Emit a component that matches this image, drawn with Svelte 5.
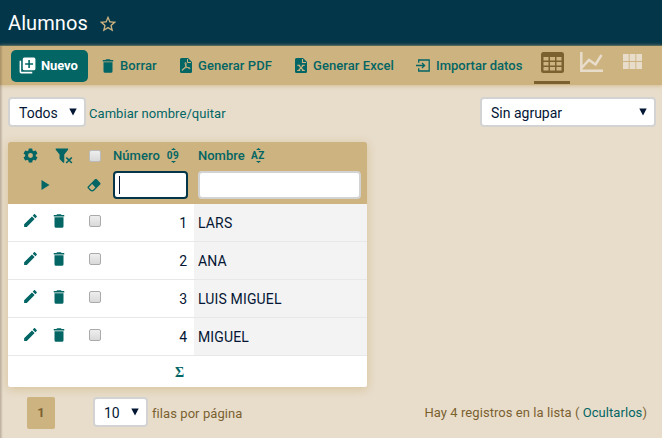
<script>
  const students = [
    { number: 1, name: 'LARS' },
    { number: 2, name: 'ANA' },
    { number: 3, name: 'LUIS MIGUEL' },
    { number: 4, name: 'MIGUEL' }
  ];

  const trash = 'M19,4H15.5L14.5,3H9.5L8.5,4H5V6H19M6,19A2,2 0 0,0 8,21H16A2,2 0 0,0 18,19V7H6V19Z';
  const pencil = 'M20.71,7.04C21.1,6.65 21.1,6 20.71,5.63L18.37,3.29C18,2.9 17.35,2.9 16.96,3.29L15.12,5.12L18.87,8.87M3,17.25V21H6.75L17.81,9.93L14.06,6.18L3,17.25Z';
  const add = 'M19,11H15V15H13V11H9V9H13V5H15V9H19M20,2H8A2,2 0 0,0 6,4V16A2,2 0 0,0 8,18H20A2,2 0 0,0 22,16V4A2,2 0 0,0 20,2M4,6H2V20A2,2 0 0,0 4,22H18V20H4V6Z';
  const star = 'M12,15.39L8.24,17.66L9.23,13.38L5.91,10.5L10.29,10.13L12,6.09L13.71,10.13L18.09,10.5L14.77,13.38L15.76,17.66M22,9.24L14.81,8.63L12,2L9.19,8.63L2,9.24L7.45,13.97L5.82,21L12,17.27L18.18,21L16.54,13.97L22,9.24Z';
  const filter = 'M14.73,20.83L17.58,18L14.73,15.17L16.15,13.76L19,16.57L21.8,13.76L23.22,15.17L20.41,18L23.22,20.83L21.8,22.24L19,19.4L16.15,22.24L14.73,20.83M13,19.88C13.04,20.18 12.94,20.5 12.71,20.71C12.32,21.1 11.69,21.1 11.3,20.71L7.29,16.7C7.06,16.47 6.96,16.16 7,15.87V10.75L2.21,4.62C1.87,4.19 1.95,3.56 2.38,3.22C2.57,3.08 2.78,3 3,3H17C17.22,3 17.43,3.08 17.62,3.22C18.05,3.56 18.13,4.19 17.79,4.62L13,10.75V19.88Z';
  const gear = 'M12,15.5A3.5,3.5 0 0,1 8.5,12A3.5,3.5 0 0,1 12,8.5A3.5,3.5 0 0,1 15.5,12A3.5,3.5 0 0,1 12,15.5M19.43,12.97C19.47,12.65 19.5,12.33 19.5,12C19.5,11.67 19.47,11.34 19.43,11L21.54,9.37C21.73,9.22 21.78,8.95 21.66,8.73L19.66,5.27C19.54,5.05 19.27,4.96 19.05,5.05L16.56,6.05C16.04,5.66 15.5,5.32 14.87,5.07L14.5,2.42C14.46,2.18 14.25,2 14,2H10C9.75,2 9.54,2.18 9.5,2.42L9.13,5.07C8.5,5.32 7.96,5.66 7.44,6.05L4.95,5.05C4.73,4.96 4.46,5.05 4.34,5.27L2.34,8.73C2.21,8.95 2.27,9.22 2.46,9.37L4.57,11C4.53,11.34 4.5,11.67 4.5,12C4.5,12.33 4.53,12.65 4.57,12.97L2.46,14.63C2.27,14.78 2.21,15.05 2.34,15.27L4.34,18.73C4.46,18.95 4.73,19.03 4.95,18.95L7.44,17.94C7.96,18.34 8.5,18.68 9.13,18.93L9.5,21.58C9.54,21.82 9.75,22 10,22H14C14.25,22 14.46,21.82 14.5,21.58L14.87,18.93C15.5,18.67 16.04,18.34 16.56,17.94L19.05,18.95C19.27,19.03 19.54,18.95 19.66,18.73L21.66,15.27C21.78,15.05 21.73,14.78 21.54,14.63L19.43,12.97Z';
</script>

{#snippet icon(path, size)}
  <svg width={size} height={size} viewBox="0 0 24 24" fill="currentColor"><path d={path} /></svg>
{/snippet}

{#snippet sorter(label)}
  <span class="sorter">
    <svg width="5" height="2" viewBox="0 0 5 2"><path d="M0 2 2.5 0 5 2z" /></svg>
    <b>{label}</b>
    <svg width="5" height="2" viewBox="0 0 5 2"><path d="M0 0 2.5 2 5 0z" /></svg>
  </span>
{/snippet}

{#snippet arrow()}
  <svg class="arrow" width="8" height="8" viewBox="0 0 8 8"><path d="M.3 .5h7.400L4 7.500z" /></svg>
{/snippet}

<div class="page">
  <header>
    <h1>Alumnos</h1>
    {@render icon(star, 20)}
  </header>

  <nav>
    <button class="action new">{@render icon(add, 19)}<span>Nuevo</span></button>
    <button class="action delete">{@render icon(trash, 18)}<span>Borrar</span></button>
    <button class="action pdf">
      <svg width="12" height="15" viewBox="0 0 12 15"><path fill="currentColor" d="M1.5 0H8l4 4v9.5A1.5 1.5 0 0 1 10.500 15h-9A1.500 1.500 0 0 1 0 13.500v-12A1.500 1.500 0 0 1 1.500 0z" /><path d="M7.500 1v3.500H11M5.300 4.500c1.200-.5 1 2.500-.1 4.500-1 2-2.400 3.900-3.100 3.300-.7-.8 1.700-2.100 3.800-2.600 2-.5 4.200-.2 4.200.6 0 1-2.500-.2-3.700-1.900C5.100 6.700 4.700 4.800 5.300 4.500z" fill="none" stroke="#cdb380" stroke-width="1" /></svg>
      <span>Generar PDF</span>
    </button>
    <button class="action excel">
      <svg width="12" height="15" viewBox="0 0 12 15"><path fill="currentColor" d="M1.500 0H8l4 4v9.500a1.500 1.500 0 0 1-1.500 1.500h-9A1.500 1.500 0 0 1 0 13.500v-12A1.500 1.500 0 0 1 1.500 0z" /><path d="M7.500 1v3.500H11M2.200 7.200h3M6.800 7.200h3M2.200 12.500h3M6.800 12.500h3M3.500 7.200l5 5.300M8.500 7.200l-5 5.300" fill="none" stroke="#cdb380" stroke-width="1.150" /></svg>
      <span>Generar Excel</span>
    </button>
    <button class="action import">
      <svg width="14" height="13" viewBox="0 0 14 13" fill="none" stroke="currentColor" stroke-width="1.300"><path d="M2.700 3.800V1h10.500v11H2.700V9.200M0 6.500h8.500M6 4l2.600 2.500L6 9" /></svg>
      <span>Importar datos</span>
    </button>
    <div class="views">
      <span class="view current">
        <svg width="23" height="21" viewBox="0 0 23 21"><rect width="23" height="21" rx="2.500" fill="#7b6130" /><path fill="#cdb380" d="M2.500 5h5v3.500h-5zM9 5h5v3.500H9zM15.500 5h5v3.500h-5zM2.500 10h5v3.500h-5zM9 10h5v3.500H9zM15.500 10h5v3.500h-5zM2.500 15h5v3.500h-5zM9 15h5v3.500H9zM15.500 15h5v3.500h-5z" /></svg>
      </span>
      <span class="view chart">
        <svg width="23" height="20" viewBox="0 0 23 20" fill="none" stroke="#e8ddcb" stroke-width="2.500"><path d="M1.300 0v18.700H23M2 15.500 9 8l6.500 4.500L21.500 3" /></svg>
      </span>
      <span class="view cards">
        <svg width="19" height="15" viewBox="0 0 19 15"><path fill="#e8ddcb" d="M0 0h5.700v7H0zM6.600 0h5.800v7H6.600zM13.300 0H19v7h-5.700zM0 8h5.700v7H0zM6.600 8h5.800v7H6.600zM13.300 8H19v7h-5.700z" /></svg>
      </span>
    </div>
  </nav>

  <main>
    <div class="config">
      <div class="select all"><span>Todos</span>{@render arrow()}</div>
      <a class="rename">Cambiar nombre/quitar</a>
      <div class="select group"><span>Sin agrupar</span>{@render arrow()}</div>
    </div>

    <section class="list">
      <div class="head">
        <div class="titles">
          <span class="c-first">{@render icon(gear, 17)}</span>
          <span class="c-second">{@render icon(filter, 19)}</span>
          <span class="c-check"><i class="check"></i></span>
          <span class="c-number"><span class="number-title">Número</span>{@render sorter('09')}</span>
          <span class="c-name"><span class="name-title">Nombre</span>{@render sorter('AZ')}</span>
        </div>
        <div class="filters">
          <span class="play"><svg width="9" height="10" viewBox="0 0 9 10" fill="currentColor"><path d="M.5 0 8.500 5 .5 10z" /></svg></span>
          <span class="clear"><svg width="16" height="16" viewBox="0 0 24 24" fill="currentColor"><path d="M16.240,3.560L21.190,8.500C21.970,9.290 21.970,10.550 21.190,11.340L12,20.530C10.440,22.090 7.910,22.090 6.340,20.530L2.810,17C2.030,16.210 2.030,14.950 2.810,14.160L13.410,3.560C14.200,2.780 15.460,2.780 16.240,3.560M4.220,15.580L7.760,19.110C8.540,19.900 9.800,19.900 10.590,19.110L14.120,15.580L9.170,10.630L4.220,15.580Z" /></svg></span>
          <span class="field focused"><i class="caret"></i></span>
          <span class="field"></span>
        </div>
      </div>
      {#each students as student}
        <div class="row">
          <span class="c-first">{@render icon(pencil, 17)}</span>
          <span class="c-second trash">{@render icon(trash, 18)}</span>
          <span class="c-check"><i class="check"></i></span>
          <span class="number">{student.number}</span>
          <span class="name"><span class="label">{student.name}</span></span>
        </div>
      {/each}
      <div class="total">Σ</div>
    </section>

    <footer>
      <span class="current-page">1</span>
      <div class="select size"><span>10</span>{@render arrow()}</div>
      <span class="per-page">filas por página</span>
      <span class="count">Hay 4 registros en la lista ( <a>Ocultarlos</a>)</span>
    </footer>
  </main>
</div>

<style>
  :global(body) { margin: 0; }
  .page {
    box-sizing: border-box;
    width: 662px;
    height: 438px;
    position: relative;
    overflow: hidden;
    background: #e8ddcb;
    color: #031634;
    font-family: Roboto, sans-serif;
    font-size: 14px;
  }
  .page::after {
    content: '';
    position: absolute;
    left: 0;
    top: 46px;
    bottom: 0;
    width: 3px;
    background: linear-gradient(90deg, rgba(65, 45, 30, .28), rgba(65, 45, 30, 0));
  }
  svg { display: block; flex: none; }
  header {
    display: flex;
    align-items: center;
    box-sizing: border-box;
    height: 45px;
    padding-left: 8px;
    background: #033649;
    color: #cdb380;
  }
  header svg { margin: 3px 0 0 10px; }
  h1 { width: 80px; margin: 0; padding-top: 2px; font-size: 20px; font-weight: 400; line-height: 43px; letter-spacing: .1px; color: #fff; }
  nav {
    display: flex;
    align-items: center;
    box-sizing: border-box;
    height: 40px;
    padding-left: 11px;
    background: #cdb380;
    border-top: 1px solid #53685a;
    box-shadow: 0 1px 4px rgba(205, 179, 128, .8);
  }
  .action {
    display: flex;
    align-items: center;
    box-sizing: border-box;
    height: 32px;
    padding: 0;
    border: 0;
    background: none;
    color: #036564;
    font: 500 13px/32px Roboto, sans-serif;
    white-space: nowrap;
  }
  .new { width: 77px; padding-left: 7px; border-radius: 5px; background: #036564; color: #fff; font-weight: 700; margin-right: 11px; }
  .new span { margin-left: 4px; letter-spacing: -.1px; }
  .delete { width: 81px; }
  .delete span { margin-left: 3px; letter-spacing: .1px; }
  .pdf { width: 115px; }
  .pdf span, .excel span { margin-left: 6px; letter-spacing: .07px; }
  .excel { width: 121px; }
  .import span { margin-left: 6px; }
  .views { display: flex; align-self: stretch; margin-left: auto; padding-right: 11px; }
  .view { box-sizing: border-box; height: 38px; display: flex; justify-content: center; }
  .current { width: 36px; padding-top: 6px; border-bottom: 3px solid #7b6130; }
  .chart { width: 43px; padding-top: 6px; }
  .cards { width: 38px; padding-top: 8px; }
  .config { display: flex; height: 57px; padding: 12px 6px 0 8px; box-sizing: border-box; }
  .select {
    display: flex;
    align-items: center;
    justify-content: space-between;
    box-sizing: border-box;
    height: 30px;
    border: 2px solid #d3d3d3;
    border-radius: 4px;
    background: #fff;
    padding: 0 7px 0 9px;
  }
  .select span { padding-top: 1px; }
  .arrow { fill: #031634; }
  .all { width: 78px; }
  .group { width: 176px; margin-left: auto; }
  .rename { margin-left: 3px; font-size: 13px; line-height: 33px; letter-spacing: .06px; color: #036564; }
  .list {
    width: 359px;
    height: 245px;
    margin-left: 8px;
    overflow: hidden;
    border-radius: 2px;
    background: #fff;
    box-shadow: 0 2px 10px rgba(205, 179, 128, .65);
  }
  .head { height: 62px; background: #cdb380; color: #036564; }
  .titles, .filters { display: flex; align-items: center; }
  .titles { height: 27px; font-size: 13px; font-weight: 500; }
  .c-first { width: 32px; padding-left: 14px; box-sizing: content-box; }
  .c-second { width: 34px; }
  .c-check { width: 25px; }
  .check { display: block; box-sizing: border-box; width: 12px; height: 12px; margin-left: 1px; border: 1px solid #aaa; border-radius: 2px; background: linear-gradient(#eee, #d9d9d9); }
  .titles .check { border-color: #bbb; }
  .c-number { display: flex; align-items: center; width: 85px; }
  .number-title { width: 53px; letter-spacing: .05px; }
  .c-name { display: flex; align-items: center; }
  .name-title { width: 53px; }
  .sorter { display: flex; flex-direction: column; align-items: center; width: 14px; fill: #036564; }
  .sorter b { font-size: 10px; line-height: 11px; font-weight: 700; letter-spacing: .5px; }
  .filters { height: 31px; }
  .play { width: 45px; padding-left: 33px; }
  .clear { width: 27px; }
  .field { display: flex; align-items: center; box-sizing: border-box; width: 163px; height: 28px; border: 2px solid #d3d3d3; border-radius: 4px; background: #fff; }
  .focused { width: 75px; margin-right: 10px; border-color: #033649; }
  .caret { width: 1px; height: 18px; margin-left: 4px; background: #031634; }
  .row { display: flex; box-sizing: border-box; height: 38px; border-bottom: 1px solid #e8e8e8; }
  .row svg { color: #036564; margin-top: 8px; }
  .row .trash svg { margin-left: -4px; }
  .row .check { margin-top: 11px; }
  .number { width: 74px; line-height: 38px; text-align: right; }
  .name { flex: 1; margin-left: 7px; padding-left: 4px; background: #f3f3f3; line-height: 38px; letter-spacing: .15px; }
  .total { padding-left: 167px; font: 700 14px/33px "Liberation Serif", serif; color: #036564; }
  footer { display: flex; align-items: flex-start; padding: 10px 15px 0 27px; font-size: 13px; color: #7b6130; }
  .current-page { width: 28px; height: 32px; margin-right: 38px; border-radius: 2px; background: #cdb380; line-height: 32px; text-align: center; font-weight: 700; }
  .size { width: 55px; font-size: 14px; color: #031634; }
  .per-page { margin-left: 4px; line-height: 33px; letter-spacing: .07px; }
  .count { margin-left: auto; line-height: 32px; letter-spacing: .06px; white-space: nowrap; }
  .count a { color: #036564; }
</style>
